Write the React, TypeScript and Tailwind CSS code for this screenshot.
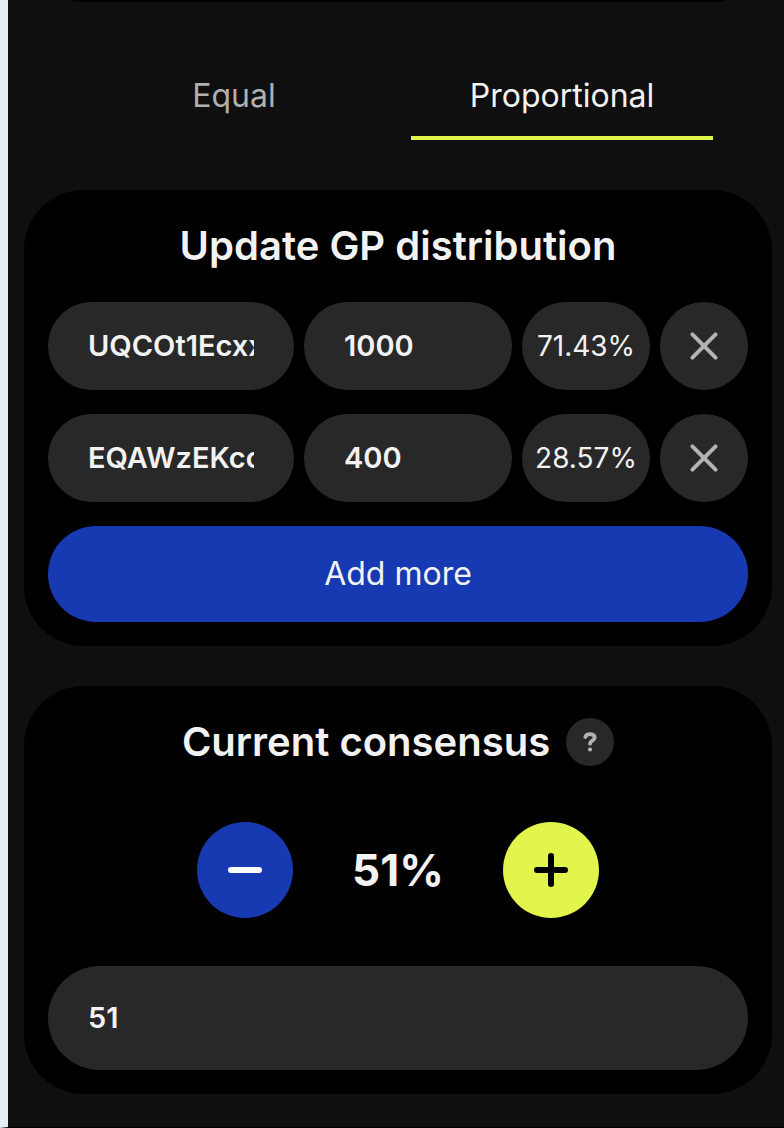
import { useState } from "react";

type Member = { id: number; address: string; points: string };

const fieldClass =
  "block w-full min-w-0 rounded-full bg-[#282828] px-10 text-[29px] font-semibold text-[#f2f2f2] outline-none";

function CrossIcon() {
  return (
    <svg width="32" height="32" viewBox="0 0 32 32" fill="none" stroke="#b3b3b3" strokeWidth="4" strokeLinecap="round" aria-hidden="true">
      <path d="M4.4 4.4 27.6 27.6M27.6 4.4 4.4 27.6" />
    </svg>
  );
}

function HelpIcon() {
  return (
    <svg width="16" height="22" viewBox="0 0 16 22" fill="none" aria-hidden="true">
      <path
        d="M3.3 6C3.9 4.2 5.6 3.1 8 3.1c2.8 0 4.7 1.4 4.7 3.6 0 3-4.7 3-4.7 6"
        stroke="#b3b3b3"
        strokeWidth="3.8"
        strokeLinecap="round"
      />
      <circle cx="8" cy="18.5" r="2.1" fill="#b3b3b3" />
    </svg>
  );
}

export default function App() {
  const [tab, setTab] = useState("Proportional");
  const [consensus, setConsensus] = useState(51);
  const [members, setMembers] = useState<Member[]>([
    { id: 1, address: "UQCOt1Ecxx", points: "1000" },
    { id: 2, address: "EQAWzEKccd", points: "400" },
  ]);

  const total = members.reduce((sum, m) => sum + (Number(m.points) || 0), 0);
  const share = (m: Member) => (total ? (((Number(m.points) || 0) / total) * 100).toFixed(2) : "0.00") + "%";
  const update = (id: number, change: Partial<Member>) =>
    setMembers(members.map((m) => (m.id === id ? { ...m, ...change } : m)));

  return (
    <div className="min-h-screen border-b border-l-8 border-b-black border-l-[#e8ecf4] bg-[#0f0f0f] pr-3 pl-4 font-['Inter','Liberation_Sans',sans-serif] text-[#f2f2f2]">
      <div className="flex h-0.5 items-end overflow-hidden">
        <div className="h-32 flex-1 shrink-0 rounded-[60px] bg-black" />
      </div>

      <div role="tablist" className="mx-[59px] mt-[54px] grid grid-cols-2 gap-[26px]">
        {["Equal", "Proportional"].map((name) => (
          <button
            key={name}
            role="tab"
            aria-selected={tab === name}
            onClick={() => setTab(name)}
            className={
              tab === name
                ? "h-[84px] border-b-4 border-[#e1f54d] text-[32px] text-[#f2f2f2]"
                : "h-[84px] border-b-4 border-transparent text-[32px] text-[#b0b0b0]"
            }
          >
            {name}
          </button>
        ))}
      </div>

      <section className="mt-[50px] rounded-[60px] bg-black px-6 pt-8 pb-6">
        <h2 className="text-center text-[40px] leading-[48px] font-semibold">Update GP distribution</h2>
        <div className="mt-8 flex flex-col gap-6">
          {members.map((m) => (
            <div key={m.id} className="grid h-[88px] grid-cols-[246fr_208fr_128px_88px] gap-[10px]">
              <input
                aria-label="Address"
                className={fieldClass}
                value={m.address}
                onChange={(e) => update(m.id, { address: e.target.value })}
              />
              <input
                aria-label="Points"
                inputMode="numeric"
                className={fieldClass}
                value={m.points}
                onChange={(e) => update(m.id, { points: e.target.value })}
              />
              <div className="flex items-center justify-center rounded-full bg-[#282828] text-[28px]">{share(m)}</div>
              <button
                aria-label="Remove"
                onClick={() => setMembers(members.filter((x) => x.id !== m.id))}
                className="flex items-center justify-center rounded-full bg-[#282828]"
              >
                <CrossIcon />
              </button>
            </div>
          ))}
          <button
            onClick={() => setMembers([...members, { id: Date.now(), address: "", points: "" }])}
            className="h-24 rounded-full bg-[#173ab3] text-[32px]"
          >
            Add more
          </button>
        </div>
      </section>

      <section className="mt-10 mb-[33px] rounded-[60px] bg-black px-6 pt-8 pb-6">
        <div className="flex items-center justify-center gap-4">
          <h2 className="text-[40px] leading-[48px] font-semibold">Current consensus</h2>
          <button aria-label="Help" className="flex size-12 items-center justify-center rounded-full bg-[#282828]">
            <HelpIcon />
          </button>
        </div>
        <div className="mt-14 flex items-center justify-center">
          <button
            aria-label="Decrease"
            onClick={() => setConsensus(Math.max(0, consensus - 1))}
            className="flex size-24 items-center justify-center rounded-full bg-[#173ab3]"
          >
            <svg width="40" height="40" viewBox="0 0 40 40" stroke="#fff" strokeWidth="6" strokeLinecap="round" aria-hidden="true">
              <path d="M6 20h28" />
            </svg>
          </button>
          <output className="w-[210px] text-center text-[44px] font-bold">{consensus}%</output>
          <button
            aria-label="Increase"
            onClick={() => setConsensus(Math.min(100, consensus + 1))}
            className="flex size-24 items-center justify-center rounded-full bg-[#e1f54d]"
          >
            <svg width="40" height="40" viewBox="0 0 40 40" stroke="#000" strokeWidth="6" strokeLinecap="round" aria-hidden="true">
              <path d="M6 20h28M20 6v28" />
            </svg>
          </button>
        </div>
        <div className="mt-12 grid h-[104px]">
          <input
            aria-label="Consensus percentage"
            inputMode="numeric"
            className={fieldClass}
            value={consensus}
            onChange={(e) => setConsensus(Number(e.target.value) || 0)}
          />
        </div>
      </section>
    </div>
  );
}
